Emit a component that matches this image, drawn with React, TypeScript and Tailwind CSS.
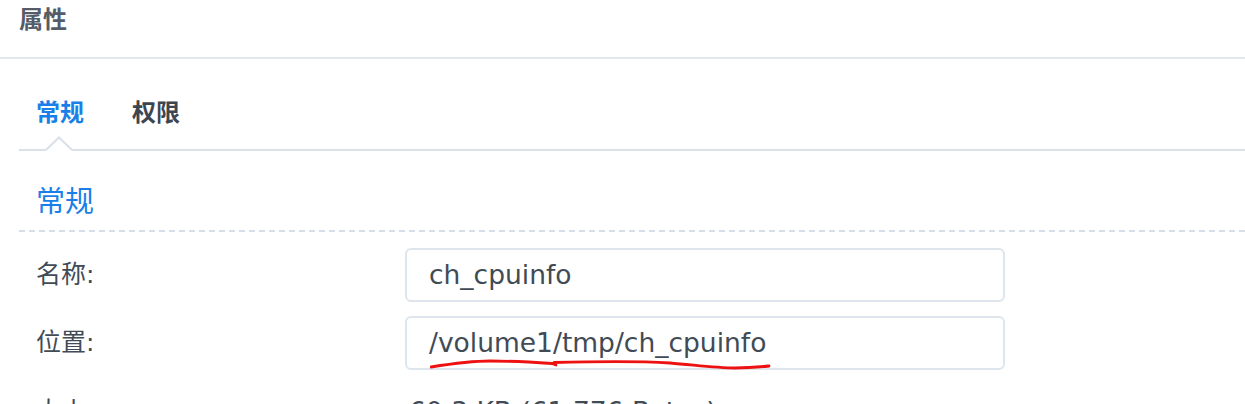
import React from 'react';

const font = { fontFamily: '"DejaVu Sans", "Noto Sans CJK SC", sans-serif' };
const cjk = { fontFamily: '"Noto Sans CJK SC", sans-serif' };

function Field({ label, value, mark }: { label: string; value: string; mark?: boolean }) {
  return (
    <div className="flex items-center h-[54px]">
      <div className="w-[386px] pl-[17px] text-[25px] text-[#414b55]">{label}</div>
      <div className="relative w-[600px] h-[54px] rounded-[6px] border-2 border-[#dfe5ec] flex items-center pl-[22px] text-[26.5px] text-[#414b55]">
        {value}
        {mark && (
          <svg className="absolute left-[23px] top-[37px]" width="345" height="18" viewBox="0 0 345 18">
            <path
              d="M1 12 C20 9 40 6 60 6 C80 6 100 7 122 8.5 L126 10 L124 7.5 C160 6.5 210 6 240 8 C265 10 285 13 305 13 C320 13 330 12 339 11"
              fill="none"
              stroke="#ee1111"
              strokeWidth="2.8"
              strokeLinecap="round"
              strokeLinejoin="round"
            />
          </svg>
        )}
      </div>
    </div>
  );
}

export default function App() {
  return (
    <div className="w-[1245px] h-[404px] overflow-hidden bg-white" style={font}>
      {/* Header */}
      <div className="h-[59px] border-b-2 border-[#e3e8ee] pl-[19px] pt-[6px]">
        <span className="text-[24px] leading-none font-bold text-[#535c68]" style={cjk}>属性</span>
      </div>

      <div className="pl-[19px]">
        {/* Tabs */}
        <div className="relative h-[92px] border-b-2 border-[#d9e1e9] flex items-start pt-[40px] pl-[17px] gap-[48px]" style={cjk}>
          <span className="text-[24px] leading-none font-bold text-[#1a7fe8]">常规</span>
          <span className="text-[24px] leading-none font-bold text-[#3d4650]">权限</span>
          <svg className="absolute left-[27px] bottom-[-2px]" width="26" height="16" viewBox="0 0 26 16">
            <path d="M0 14 L13 1.5 L26 14 L26 16 L0 16 Z" fill="#ffffff" />
            <path d="M0 15 L13 2.5 L26 15" fill="none" stroke="#d9e1e9" strokeWidth="2" />
          </svg>
        </div>

        {/* Section header */}
        <div className="h-[81px] border-b-2 border-dashed border-[#d6dfe8] pt-[34px] pl-[17px]" style={cjk}>
          <span className="text-[29px] leading-none text-[#1a7fe8]">常规</span>
        </div>

        {/* Fields */}
        <div className="pt-[16px] flex flex-col gap-[14px]">
          <Field label="名称:" value="ch_cpuinfo" />
          <Field label="位置:" value="/volume1/tmp/ch_cpuinfo" mark />
          <div className="flex items-start pt-[8px]">
            <div className="w-[386px] pl-[17px] text-[25px] leading-[40px] text-[#414b55]">大小:</div>
            <div className="pl-[4px] text-[26.5px] leading-[40px] text-[#414b55]">60.3 KB (61,776 Bytes)</div>
          </div>
        </div>
      </div>
    </div>
  );
}
